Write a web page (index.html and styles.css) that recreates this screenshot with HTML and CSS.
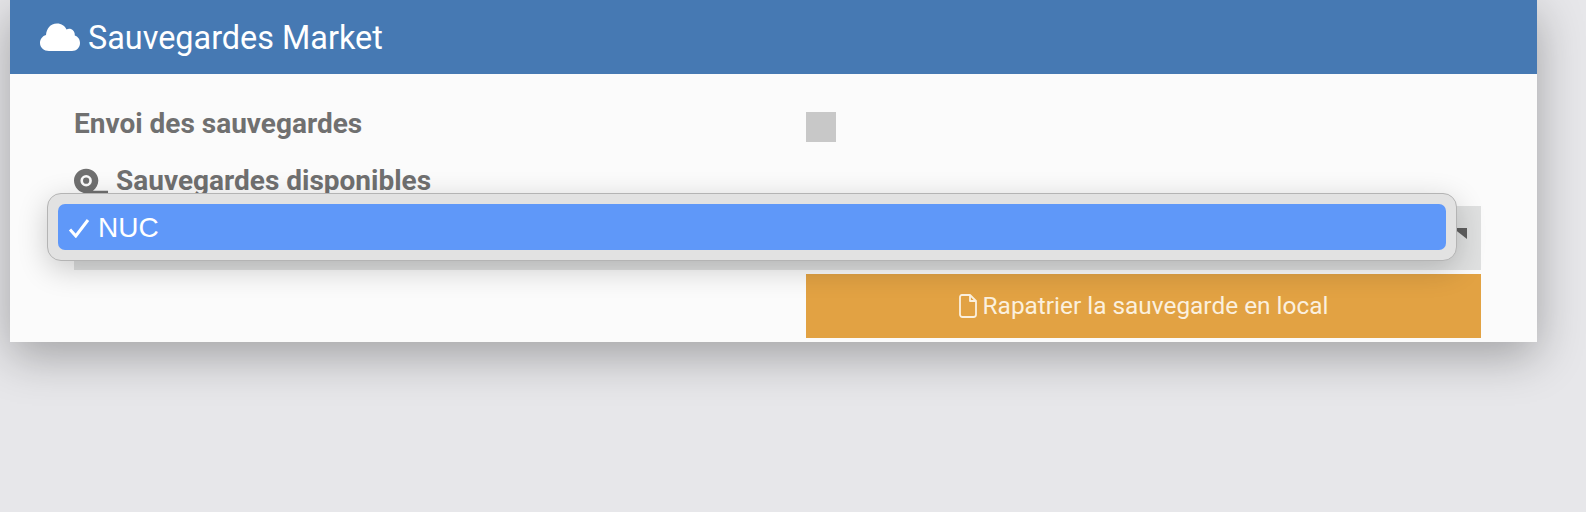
FILE: index.html
```html
<!DOCTYPE html>
<html lang="fr">
<head>
<meta charset="utf-8">
<title>Sauvegardes Market</title>
<link rel="stylesheet" href="styles.css">
</head>
<body>
<section class="panel">
  <header class="panel-head">
    <svg class="cloud" viewBox="0 0 40 28" aria-hidden="true"><path d="M9 28C4 28 0 24.500 0 20C0 16 2.500 13 6 12C6.500 6 10 0.500 17 0.500C21.500 0.500 25 3 26.500 6.500C28 5.500 29.500 5.500 31 6C33.500 7 35 9.500 34.800 12.500C38 13.500 40 16.500 40 20C40 24.500 36.500 28 32 28Z" fill="#fff"/></svg>
    <h1 class="panel-title">Sauvegardes Market</h1>
  </header>
  <div class="panel-body">
    <div class="row row-send">
      <div class="label">Envoi des sauvegardes</div>
      <div class="field"><span class="checkbox"></span></div>
    </div>
    <div class="label label-icon">
      <svg class="tape" viewBox="0 0 36 26" aria-hidden="true"><path fill-rule="evenodd" d="M12.500 0.500C19.500 0.500 25 6 25 12.500C25 16.800 22.800 20.500 19.500 23H35V25.500H12.500C5.500 25.500 0 19.500 0 12.500C0 6 5.500 0.500 12.500 0.500ZM12.500 6.800A5.900 5.900 0 1 0 12.500 18.600A5.900 5.900 0 1 0 12.500 6.800ZM12.500 9.500A3.200 3.200 0 1 1 12.500 15.900A3.200 3.200 0 1 1 12.500 9.500Z" fill="#707070"/></svg>
      Sauvegardes disponibles
    </div>
    <div class="select"><span class="arrow"></span></div>
    <div class="row row-action">
      <div class="spacer"></div>
      <button class="action" type="button">
        <svg class="file" viewBox="0 0 18 24" aria-hidden="true"><path d="M3 1H11L17 7V20.500C17 22 16 23 14.500 23H3.500C2 23 1 22 1 20.500V3C1 1.800 1.800 1 3 1ZM11 1V7H17" fill="none" stroke="currentColor" stroke-width="1.800" stroke-linejoin="round"/></svg>
        Rapatrier la sauvegarde en local
      </button>
    </div>
  </div>
</section>
<div class="menu">
  <div class="option">
    <svg class="check" viewBox="0 0 22 20" aria-hidden="true"><path d="M2 11.500L7.800 18L20 2" fill="none" stroke="#fff" stroke-width="3"/></svg>
    NUC
  </div>
</div>
</body>
</html>
```
FILE: styles.css
```css
html, body {
  margin: 0;
  padding: 0;
  height: 512px;
  overflow: hidden;
}
body {
  background: #e7e7ea;
  font-family: Roboto, "Liberation Sans", sans-serif;
  position: relative;
}
.panel {
  margin-left: 10px;
  width: 1527px;
  height: 342px;
  background: #fbfbfb;
  box-shadow: 0 14px 44px rgba(0, 0, 0, 0.3);
  overflow: hidden;
}
.panel-head {
  height: 74px;
  background: #4679b3;
  color: #fff;
  display: flex;
  align-items: center;
  padding-left: 30px;
  gap: 8px;
}
.cloud {
  width: 40px;
  height: 28px;
  flex: none;
}
.panel-title {
  margin: 0;
  font-size: 32.4px;
  font-weight: 400;
  line-height: 40px;
  position: relative;
  top: 1px;
}
.panel-body {
  padding: 35px 56px 0 64px;
}
.row {
  display: flex;
}
.row-send {
  height: 54px;
}
.label {
  color: #707070;
  font-size: 28px;
  font-weight: 700;
  line-height: 30px;
  width: 732px;
  flex: none;
}
.field {
  display: flex;
  padding-top: 3px;
}
.checkbox {
  display: block;
  width: 30px;
  height: 30px;
  background: #c8c8c8;
}
.label-icon {
  display: flex;
  align-items: center;
  gap: 7px;
  width: auto;
  height: 36px;
  margin-bottom: 7px;
  white-space: nowrap;
}
.tape {
  width: 35px;
  height: 26px;
  flex: none;
}
.select {
  height: 64px;
  background: #dfe0e0;
  position: relative;
}
.arrow {
  position: absolute;
  right: 14px;
  top: 22px;
  width: 0;
  height: 0;
  border-top: 11px solid #5f5f5f;
  border-left: 14px solid transparent;
}
.row-action {
  margin-top: 4px;
}
.spacer {
  width: 732px;
  flex: none;
}
.action {
  flex: 1;
  height: 64px;
  border: 0;
  padding: 0;
  background: #e2a243;
  color: #fbf0de;
  font: 400 24.4px/30px Roboto, "Liberation Sans", sans-serif;
  display: flex;
  align-items: center;
  justify-content: center;
  gap: 6px;
}
.file {
  width: 18px;
  height: 24px;
  flex: none;
}
.menu {
  position: absolute;
  left: 47px;
  top: 193px;
  width: 1410px;
  height: 68px;
  box-sizing: border-box;
  padding: 10px;
  background: #e2e2e2;
  border: 1px solid #b4b4b4;
  border-radius: 14px;
  box-shadow: 0 8px 30px rgba(0, 0, 0, 0.2);
}
.option {
  height: 46px;
  background: #5f98f9;
  border-radius: 7px;
  color: #fff;
  font: 400 28px/46px "Liberation Sans", sans-serif;
  display: flex;
  align-items: center;
  padding-left: 10px;
  padding-top: 2px;
  box-sizing: border-box;
  gap: 8px;
}
.check {
  width: 22px;
  height: 20px;
  flex: none;
}
```
